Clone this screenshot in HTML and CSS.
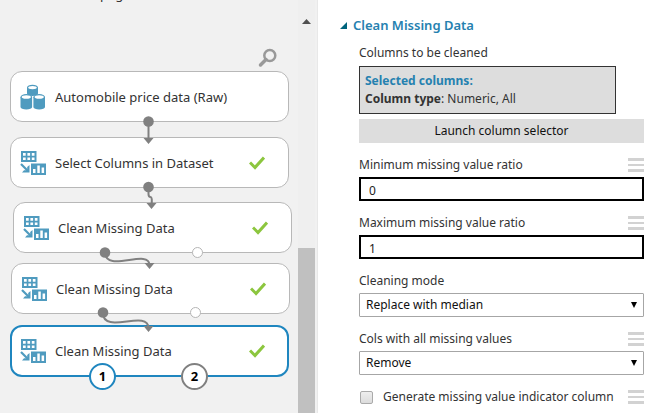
FILE: index.html
```html
<!DOCTYPE html>
<html lang="en">
<head>
<meta charset="utf-8">
<title>Experiment</title>
<link rel="stylesheet" href="styles.css">
</head>
<body>
<svg class="defs" width="0" height="0" aria-hidden="true">
  <symbol id="data" viewBox="0 0 26 26">
    <g fill="#4f9bbf">
      <path d="M7 3.500v6a5.500 2.500 0 0 0 11 0v-6z"/><ellipse cx="12.500" cy="3.500" rx="5.500" ry="2.800"/>
      <path d="M.5 13v10a5.800 2.500 0 0 0 11.600 0V13z"/><ellipse cx="6.300" cy="13" rx="5.800" ry="3"/>
      <path d="M13.400 13v10a5.800 2.500 0 0 0 11.600 0V13z"/><ellipse cx="19.200" cy="13" rx="5.800" ry="3"/>
    </g>
    <g fill="#fff"><ellipse cx="12.500" cy="3.600" rx="4.300" ry="1.700"/><ellipse cx="6.300" cy="13" rx="4.600" ry="1.800"/><ellipse cx="19.200" cy="13" rx="4.600" ry="1.800"/></g>
  </symbol>
  <symbol id="transform" viewBox="0 0 26 26">
    <path fill="#4f9bbf" d="M1 1h15.500v11H1zM11 13.500h15V25H11z"/>
    <path fill="#fff" d="M3 3h2.700v2.700H3zM7.400 3h2.700v2.700H7.400zM11.800 3h2.700v2.700h-2.700zM3 7.400h2.700v2.700H3zM7.400 7.400h2.700v2.700H7.400zM11.800 7.400h2.700v2.700h-2.700zM13 19h2.500v4H13zM17.300 15.500h2.500V23h-2.500zM21.600 17.500h2.500V23h-2.500z"/>
    <path fill="none" stroke="#4f9bbf" stroke-width="2.200" d="M1 14l7 7"/>
    <path fill="#4f9bbf" d="M9.500 15v7.500H2l2-2.300h3.200V17z"/>
  </symbol>
  <symbol id="check" viewBox="0 0 16 14">
    <path fill="none" stroke="#8cc63e" stroke-width="3" d="M1 6.500l5 5L15 1.500"/>
  </symbol>
  <symbol id="menu" viewBox="0 0 16 14">
    <path fill="#d2d2d2" d="M0 0h16v3H0zM0 6h16v2H0zM0 11h16v3H0z"/>
  </symbol>
</svg>
<main class="app">
  <section class="canvas" aria-label="Experiment canvas">
    <span class="caption">page</span>
    <svg class="search" width="20" height="20" viewBox="0 0 20 20"><circle cx="11.800" cy="7.500" r="5.500" fill="none" stroke="#999" stroke-width="2.500"/><path d="M8 11.500l-5.500 5.500" stroke="#999" stroke-width="3.500" stroke-linecap="round"/></svg>
    <article class="node n1"><svg class="kind"><use href="#data"/></svg><span>Automobile price data (Raw)</span></article>
    <article class="node n2"><svg class="kind"><use href="#transform"/></svg><span>Select Columns in Dataset</span><svg class="check"><use href="#check"/></svg></article>
    <article class="node n3"><svg class="kind"><use href="#transform"/></svg><span>Clean Missing Data</span><svg class="check"><use href="#check"/></svg></article>
    <article class="node n4"><svg class="kind"><use href="#transform"/></svg><span>Clean Missing Data</span><svg class="check"><use href="#check"/></svg></article>
    <article class="node n5 selected"><svg class="kind"><use href="#transform"/></svg><span>Clean Missing Data</span><svg class="check"><use href="#check"/></svg></article>
    <svg class="wires" width="298" height="413" viewBox="0 0 298 413">
      <g fill="none" stroke="#808080" stroke-width="2">
        <path d="M148.500 122v18"/>
        <path d="M148.500 187v7q0 3 2 3t1 8"/>
        <path d="M105 252c0 22 44-4 44.500 13"/>
        <path d="M103 313c0 22 45-4 45.500 15"/>
      </g>
      <g fill="#808080">
        <path d="M143.500 138h10l-5 6zM146.500 203h10l-5 6zM144.500 263h10l-5 6zM143.500 326h10l-5 6z"/>
        <circle cx="148.500" cy="121.500" r="5.300"/><circle cx="148.500" cy="187" r="5.300"/><circle cx="105" cy="252.500" r="5.300"/><circle cx="103" cy="312.500" r="5.300"/>
      </g>
      <g fill="#fff" stroke="#b5b5b5"><circle cx="197.500" cy="252.500" r="5"/><circle cx="195.500" cy="312.500" r="5"/></g>
    </svg>
    <span class="port p1">1</span>
    <span class="port p2">2</span>
    <div class="scroll"><svg width="9" height="5" viewBox="0 0 9 5"><path d="M0 5l4.500-5L9 5z" fill="#505050"/></svg><i class="thumb"></i></div>
  </section>
  <form class="panel">
    <h2><svg width="7" height="7" viewBox="0 0 7 7"><path d="M7 0v7H0z" fill="#00647d"/></svg>Clean Missing Data</h2>
    <div class="fields">
      <p class="intro">Columns to be cleaned</p>
      <div class="summary"><strong class="accent">Selected columns:</strong><div><strong>Column type</strong>: Numeric, All</div></div>
      <button class="launch" type="button">Launch column selector</button>
      <div class="head"><label for="min">Minimum missing value ratio</label><svg class="menu"><use href="#menu"/></svg></div>
      <input class="text" id="min" type="text" value="0">
      <div class="head"><label for="max">Maximum missing value ratio</label><svg class="menu"><use href="#menu"/></svg></div>
      <input class="text" id="max" type="text" value="1">
      <div class="head"><label for="mode">Cleaning mode</label></div>
      <div class="pick"><select id="mode"><option>Replace with median</option></select><svg class="arrow" viewBox="0 0 6 6"><path d="M0 0h6L3 6z"/></svg></div>
      <div class="head"><label for="cols">Cols with all missing values</label><svg class="menu"><use href="#menu"/></svg></div>
      <div class="pick"><select id="cols"><option>Remove</option></select><svg class="arrow" viewBox="0 0 6 6"><path d="M0 0h6L3 6z"/></svg></div>
      <div class="head"><label class="tick"><input type="checkbox">Generate missing value indicator column</label><svg class="menu"><use href="#menu"/></svg></div>
    </div>
  </form>
</main>
</body>
</html>
```
FILE: styles.css
```css
* { box-sizing: border-box; }
body { margin: 0; background: #fff; color: #333; font: 13px/18px "Noto Sans", "Open Sans", sans-serif; }
.defs { position: absolute; }
.app { display: grid; grid-template-columns: 318px minmax(0, 1fr); min-height: 100vh; overflow: hidden; }

.canvas { position: relative; overflow: hidden; background: #f1f1f1; border-right: 1px solid #e8e8e8; }
.caption { position: absolute; left: 100px; top: -15px; }
.search { position: absolute; left: 258px; top: 48px; }
.node { position: absolute; display: flex; align-items: center; width: 279px; height: 51px; padding: 0 23px 0 9px; background: #fff; border: 1px solid #b8b8b8; border-radius: 12px; }
.node span { flex: 1; margin-left: 9px; white-space: nowrap; }
.n1 { left: 10px; top: 71px; }
.n2 { left: 10px; top: 137px; }
.n3 { left: 13px; top: 202px; }
.n4 { left: 11px; top: 263px; }
.n5 { left: 10px; top: 325px; }
.selected { height: 52px; padding: 0 22px 0 8px; border: 2px solid #1f86bf; }
.kind { width: 26px; height: 26px; }
.check { width: 16px; height: 14px; }
.wires { position: absolute; left: 0; top: 0; }
.port { position: absolute; top: 363px; width: 27px; height: 27px; border: 2px solid #1f86bf; border-radius: 50%; background: #fff; color: #000; font-weight: 700; line-height: 23px; text-align: center; }
.p1 { left: 89px; }
.p2 { left: 181px; border-color: #808080; }
.scroll { display: flex; flex-direction: column; align-items: center; justify-content: space-between; width: 17px; height: 100%; margin: 0 2px 0 auto; padding-top: 19px; background: #efefef; }
.thumb { width: 100%; height: 165px; background: #c0c0c0; }

.panel { padding: 16px 8px 0 22px; font-size: 12px; }
h2 { display: flex; align-items: center; gap: 6px; margin: 0; color: #2581b0; font-size: 13px; font-weight: 600; line-height: 18px; }
.fields { display: flex; flex-direction: column; padding-left: 19px; }
.intro { margin: 10px 0 4px; }
.summary { width: 90%; height: 48px; padding: 5px; border: 1px solid #333; background: #ddd; }
.accent { color: #2581b0; }
.launch { height: 24px; margin-top: 5px; border: 0; background: #ddd; color: #111; font: inherit; }
.head { display: flex; align-items: center; justify-content: space-between; height: 34px; padding-top: 10px; }
.menu { width: 16px; height: 14px; }
.text { width: 100%; height: 24px; padding: 2px 8px 0; border: 2px solid #000; background: #fff; color: #222; font: inherit; }
.pick { position: relative; height: 24px; }
.pick select { appearance: none; width: 100%; height: 24px; padding: 0 6px; border: 1px solid #a6a6a6; border-radius: 1px; background: #fff; color: #111; font: inherit; }
.arrow { position: absolute; right: 7px; top: 9px; width: 6px; height: 6px; pointer-events: none; }
.tick { display: flex; align-items: center; gap: 10px; white-space: nowrap; }
.tick input { appearance: none; width: 13px; height: 13px; margin: 0 0 0 1px; border: 1px solid #aaa; border-radius: 2px; background: linear-gradient(#eee, #dcdcdc); }
```
